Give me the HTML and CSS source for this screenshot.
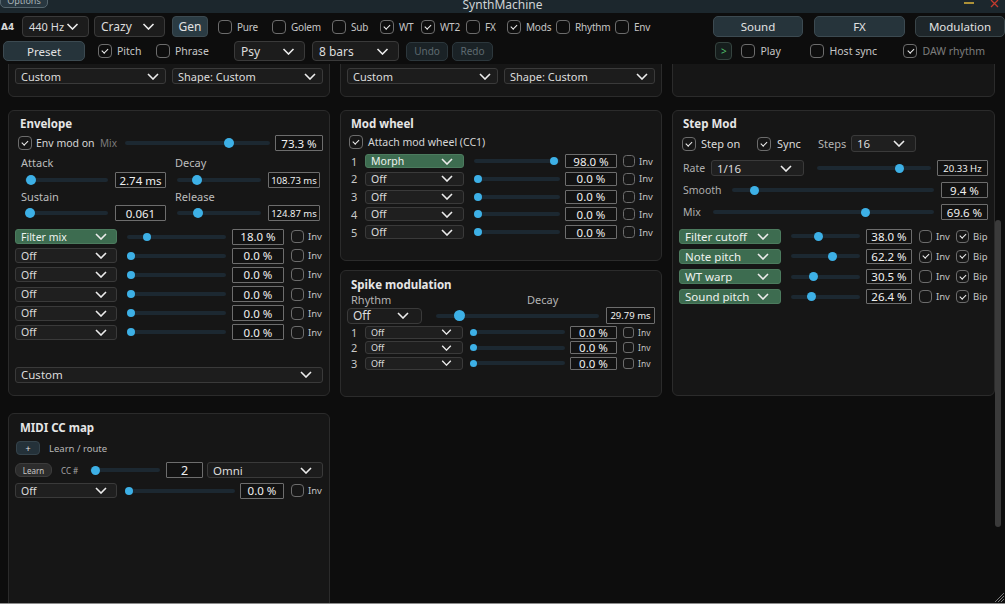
FILE: index.html
```html
<!DOCTYPE html>
<html lang="en">
<head>
<meta charset="utf-8">
<title>SynthMachine</title>
<link rel="stylesheet" href="styles.css">
</head>
<body>
<div class="app">
  <header class="titlebar">
    <div class="tb-left"><span class="opt-btn">Options</span></div>
    <div class="tb-title">SynthMachine</div>
    <div class="tb-right">
      <svg class="win-min" viewBox="0 0 10 4"><path d="M0 2h10"/></svg>
      <svg class="win-close" viewBox="0 0 9 9"><path d="M1 1l7 7M8 1l-7 7"/></svg>
    </div>
  </header>

  <div class="toolbar">
    <div class="trow r1">
      <span class="a4">A4</span>
      <div class="sel tsel w67"><span>440 Hz</span><svg class="chev" viewBox="0 0 12 7"><path d="M1 1l5 5 5-5"/></svg></div>
      <div class="sel tsel w71 ml5 big"><span>Crazy</span><svg class="chev" viewBox="0 0 12 7"><path d="M1 1l5 5 5-5"/></svg></div>
      <button class="btn gen">Gen</button>
      <label class="ck c1 w54"><span class="cb"></span>Pure</label>
      <label class="ck c1 w60"><span class="cb"></span>Golem</label>
      <label class="ck c1 w48"><span class="cb"></span>Sub</label>
      <label class="ck c1 w41"><span class="cb on"></span>WT</label>
      <label class="ck c1 w45"><span class="cb on"></span>WT2</label>
      <label class="ck c1 w41"><span class="cb"></span>FX</label>
      <label class="ck c1 w49"><span class="cb on"></span>Mods</label>
      <label class="ck c1 w59"><span class="cb"></span>Rhythm</label>
      <label class="ck c1"><span class="cb"></span>Env</label>
      <div class="tright">
        <button class="btn tab">Sound</button>
        <button class="btn tab fx">FX</button>
        <button class="btn tab mod">Modulation</button>
      </div>
    </div>
    <div class="trow r2">
      <button class="btn preset">Preset</button>
      <label class="ck w58 ml13"><span class="cb on"></span>Pitch</label>
      <label class="ck w78"><span class="cb"></span>Phrase</label>
      <div class="sel tsel t2 w71"><span>Psy</span><svg class="chev" viewBox="0 0 12 7"><path d="M1 1l5 5 5-5"/></svg></div>
      <div class="sel tsel t2 w87 ml7"><span>8 bars</span><svg class="chev" viewBox="0 0 12 7"><path d="M1 1l5 5 5-5"/></svg></div>
      <button class="btn dis undo">Undo</button>
      <button class="btn dis redo">Redo</button>
      <div class="tright r2r">
        <button class="btn go">&gt;</button>
        <label class="ck w69"><span class="cb"></span>Play</label>
        <label class="ck w93"><span class="cb"></span>Host sync</label>
        <label class="ck dimtxt"><span class="cb on"></span>DAW rhythm</label>
      </div>
    </div>
  </div>

  <main class="main">
    <div class="cols">
      <!-- column 1 -->
      <div class="col">
        <section class="panel ptop">
          <div class="sel"><span>Custom</span><svg class="chev" viewBox="0 0 12 7"><path d="M1 1l5 5 5-5"/></svg></div>
          <div class="sel"><span>Shape: Custom</span><svg class="chev" viewBox="0 0 12 7"><path d="M1 1l5 5 5-5"/></svg></div>
        </section>

        <section class="panel env">
          <div class="ptitle">Envelope</div>
          <div class="row envmod">
            <span class="cb on"></span><span class="envlbl">Env mod on</span><span class="mixlbl">Mix</span>
            <div class="sl d10" style="--v:.733"><i></i></div>
            <span class="val w48">73.3 %</span>
          </div>
          <div class="halves lbls">
            <span class="hl">Attack</span><span>Decay</span>
          </div>
          <div class="halves sls">
            <div class="hrow hl"><div class="sl d10" style="--v:.015"><i></i></div><span class="val w51">2.74 ms</span></div>
            <div class="hrow hr"><div class="sl d10" style="--v:.2"><i></i></div><span class="val w52 sm">108.73 ms</span></div>
          </div>
          <div class="halves lbls l2">
            <span class="hl">Sustain</span><span>Release</span>
          </div>
          <div class="halves sls s2">
            <div class="hrow hl"><div class="sl d10" style="--v:0"><i></i></div><span class="val w51">0.061</span></div>
            <div class="hrow hr"><div class="sl d10" style="--v:.216"><i></i></div><span class="val w52 sm">124.87 ms</span></div>
          </div>
          <div class="mods emods">
            <div class="mrow"><div class="sel green w102"><span>Filter mix</span><svg class="chev" viewBox="0 0 12 7"><path d="M1 1l5 5 5-5"/></svg></div><div class="sl d8" style="--v:.18"><i></i></div><span class="val w52">18.0 %</span><span class="cb s13"></span><span class="inv">Inv</span></div>
            <div class="mrow"><div class="sel w102"><span>Off</span><svg class="chev" viewBox="0 0 12 7"><path d="M1 1l5 5 5-5"/></svg></div><div class="sl d8" style="--v:0"><i></i></div><span class="val w52">0.0 %</span><span class="cb s13"></span><span class="inv">Inv</span></div>
            <div class="mrow"><div class="sel w102"><span>Off</span><svg class="chev" viewBox="0 0 12 7"><path d="M1 1l5 5 5-5"/></svg></div><div class="sl d8" style="--v:0"><i></i></div><span class="val w52">0.0 %</span><span class="cb s13"></span><span class="inv">Inv</span></div>
            <div class="mrow"><div class="sel w102"><span>Off</span><svg class="chev" viewBox="0 0 12 7"><path d="M1 1l5 5 5-5"/></svg></div><div class="sl d8" style="--v:0"><i></i></div><span class="val w52">0.0 %</span><span class="cb s13"></span><span class="inv">Inv</span></div>
            <div class="mrow"><div class="sel w102"><span>Off</span><svg class="chev" viewBox="0 0 12 7"><path d="M1 1l5 5 5-5"/></svg></div><div class="sl d8" style="--v:0"><i></i></div><span class="val w52">0.0 %</span><span class="cb s13"></span><span class="inv">Inv</span></div>
            <div class="mrow"><div class="sel w102"><span>Off</span><svg class="chev" viewBox="0 0 12 7"><path d="M1 1l5 5 5-5"/></svg></div><div class="sl d8" style="--v:0"><i></i></div><span class="val w52">0.0 %</span><span class="cb s13"></span><span class="inv">Inv</span></div>
          </div>
          <div class="sel envfoot"><span>Custom</span><svg class="chev" viewBox="0 0 12 7"><path d="M1 1l5 5 5-5"/></svg></div>
        </section>

        <section class="panel midi">
          <div class="ptitle">MIDI CC map</div>
          <div class="row plusrow">
            <button class="btn plus">+</button><span class="lr">Learn / route</span>
          </div>
          <div class="row learnrow">
            <button class="btn learn">Learn</button><span class="cclbl">CC #</span>
            <div class="sl d9" style="--v:.01"><i></i></div>
            <span class="val w37 big">2</span>
            <div class="sel omni"><span>Omni</span><svg class="chev" viewBox="0 0 12 7"><path d="M1 1l5 5 5-5"/></svg></div>
          </div>
          <div class="mrow midioff"><div class="sel w102"><span>Off</span><svg class="chev" viewBox="0 0 12 7"><path d="M1 1l5 5 5-5"/></svg></div><div class="sl d8" style="--v:0"><i></i></div><span class="val w44">0.0 %</span><span class="cb s13"></span><span class="inv">Inv</span></div>
        </section>
      </div>

      <!-- column 2 -->
      <div class="col">
        <section class="panel ptop">
          <div class="sel"><span>Custom</span><svg class="chev" viewBox="0 0 12 7"><path d="M1 1l5 5 5-5"/></svg></div>
          <div class="sel"><span>Shape: Custom</span><svg class="chev" viewBox="0 0 12 7"><path d="M1 1l5 5 5-5"/></svg></div>
        </section>

        <section class="panel wheel">
          <div class="ptitle">Mod wheel</div>
          <div class="row attach"><span class="cb on"></span><span>Attach mod wheel (CC1)</span></div>
          <div class="mods wmods">
            <div class="wrow"><span class="num">1</span><div class="sel green w99"><span>Morph</span><svg class="chev" viewBox="0 0 12 7"><path d="M1 1l5 5 5-5"/></svg></div><div class="sl d8" style="--v:.98"><i></i></div><span class="val w52">98.0 %</span><span class="cb s12"></span><span class="inv">Inv</span></div>
            <div class="wrow"><span class="num">2</span><div class="sel w99"><span>Off</span><svg class="chev" viewBox="0 0 12 7"><path d="M1 1l5 5 5-5"/></svg></div><div class="sl d8" style="--v:0"><i></i></div><span class="val w52">0.0 %</span><span class="cb s12"></span><span class="inv">Inv</span></div>
            <div class="wrow"><span class="num">3</span><div class="sel w99"><span>Off</span><svg class="chev" viewBox="0 0 12 7"><path d="M1 1l5 5 5-5"/></svg></div><div class="sl d8" style="--v:0"><i></i></div><span class="val w52">0.0 %</span><span class="cb s12"></span><span class="inv">Inv</span></div>
            <div class="wrow"><span class="num">4</span><div class="sel w99"><span>Off</span><svg class="chev" viewBox="0 0 12 7"><path d="M1 1l5 5 5-5"/></svg></div><div class="sl d8" style="--v:0"><i></i></div><span class="val w52">0.0 %</span><span class="cb s12"></span><span class="inv">Inv</span></div>
            <div class="wrow"><span class="num">5</span><div class="sel w99"><span>Off</span><svg class="chev" viewBox="0 0 12 7"><path d="M1 1l5 5 5-5"/></svg></div><div class="sl d8" style="--v:0"><i></i></div><span class="val w52">0.0 %</span><span class="cb s12"></span><span class="inv">Inv</span></div>
          </div>
        </section>

        <section class="panel spike">
          <div class="ptitle">Spike modulation</div>
          <div class="row spklbls"><span class="rhy">Rhythm</span><span class="dec">Decay</span></div>
          <div class="row spkmain">
            <div class="sel spksel"><span>Off</span><svg class="chev" viewBox="0 0 12 7"><path d="M1 1l5 5 5-5"/></svg></div>
            <div class="sl d11" style="--v:.12"><i></i></div>
            <span class="val w49 sm h17">29.79 ms</span>
          </div>
          <div class="mods smods">
            <div class="srow"><span class="num">1</span><div class="sel w98 tiny"><span>Off</span><svg class="chev" viewBox="0 0 12 7"><path d="M1 1l5 5 5-5"/></svg></div><div class="sl d7" style="--v:0"><i></i></div><span class="val w47">0.0 %</span><span class="cb s11"></span><span class="inv small">Inv</span></div>
            <div class="srow"><span class="num">2</span><div class="sel w98 tiny"><span>Off</span><svg class="chev" viewBox="0 0 12 7"><path d="M1 1l5 5 5-5"/></svg></div><div class="sl d7" style="--v:0"><i></i></div><span class="val w47">0.0 %</span><span class="cb s11"></span><span class="inv small">Inv</span></div>
            <div class="srow"><span class="num">3</span><div class="sel w98 tiny"><span>Off</span><svg class="chev" viewBox="0 0 12 7"><path d="M1 1l5 5 5-5"/></svg></div><div class="sl d7" style="--v:0"><i></i></div><span class="val w47">0.0 %</span><span class="cb s11"></span><span class="inv small">Inv</span></div>
          </div>
        </section>
      </div>

      <!-- column 3 -->
      <div class="col">
        <section class="panel ptop"></section>

        <section class="panel step">
          <div class="ptitle">Step Mod</div>
          <div class="row stepon">
            <span class="cb on"></span><span class="son">Step on</span>
            <span class="cb on"></span><span class="sync">Sync</span>
            <span class="steps">Steps</span>
            <div class="sel w65 mid"><span>16</span><svg class="chev" viewBox="0 0 12 7"><path d="M1 1l5 5 5-5"/></svg></div>
          </div>
          <div class="row rate">
            <span class="glbl w28">Rate</span>
            <div class="sel w93 mid"><span>1/16</span><svg class="chev" viewBox="0 0 12 7"><path d="M1 1l5 5 5-5"/></svg></div>
            <div class="sl d9" style="--v:.745"><i></i></div>
            <span class="val w51 sm">20.33 Hz</span>
          </div>
          <div class="row smooth">
            <span class="glbl w49">Smooth</span>
            <div class="sl d9" style="--v:.094"><i></i></div>
            <span class="val w47">9.4 %</span>
          </div>
          <div class="row smix">
            <span class="glbl w30">Mix</span>
            <div class="sl d9" style="--v:.696"><i></i></div>
            <span class="val w47">69.6 %</span>
          </div>
          <div class="mods stmods">
            <div class="strow"><div class="sel green w102 mid"><span>Filter cutoff</span><svg class="chev" viewBox="0 0 12 7"><path d="M1 1l5 5 5-5"/></svg></div><div class="sl d9" style="--v:.38"><i></i></div><span class="val w46">38.0 %</span><span class="cb s13"></span><span class="inv">Inv</span><span class="cb s13 on"></span><span class="inv">Bip</span></div>
            <div class="strow"><div class="sel green w102 mid"><span>Note pitch</span><svg class="chev" viewBox="0 0 12 7"><path d="M1 1l5 5 5-5"/></svg></div><div class="sl d9" style="--v:.622"><i></i></div><span class="val w46">62.2 %</span><span class="cb s13 on"></span><span class="inv">Inv</span><span class="cb s13 on"></span><span class="inv">Bip</span></div>
            <div class="strow"><div class="sel green w102 mid"><span>WT warp</span><svg class="chev" viewBox="0 0 12 7"><path d="M1 1l5 5 5-5"/></svg></div><div class="sl d9" style="--v:.305"><i></i></div><span class="val w46">30.5 %</span><span class="cb s13"></span><span class="inv">Inv</span><span class="cb s13 on"></span><span class="inv">Bip</span></div>
            <div class="strow"><div class="sel green w102 mid"><span>Sound pitch</span><svg class="chev" viewBox="0 0 12 7"><path d="M1 1l5 5 5-5"/></svg></div><div class="sl d9" style="--v:.264"><i></i></div><span class="val w46">26.4 %</span><span class="cb s13"></span><span class="inv">Inv</span><span class="cb s13 on"></span><span class="inv">Bip</span></div>
          </div>
        </section>
      </div>
    </div>
    <div class="vscroll"></div>
  </main>
  <svg class="grip" viewBox="0 0 10 10"><path d="M9 3L3 9M9 6L6 9M9 0L0 9"/></svg>
</div>
</body>
</html>
```

FILE: styles.css
```css
* { box-sizing: border-box; }
html, body { margin: 0; padding: 0; background: #0d0d0d; }
body {
  width: 1005px; height: 604px; overflow: hidden;
  font-family: "Noto Sans", "DejaVu Sans", sans-serif;
  font-size: 10.5px; color: #d4d4d4;
}
button { font: inherit; color: inherit; margin: 0; padding: 0; }
.app {
  position: relative; height: 604px; display: flex; flex-direction: column;
  overflow: hidden; border-bottom: 1px solid #8c8c8c;
}

/* title bar */
.titlebar {
  flex: none; height: 13px; background: #1c272d;
  display: grid; grid-template-columns: 1fr auto 1fr; overflow: hidden;
}
.tb-left { display: flex; align-items: flex-start; }
.opt-btn {
  margin-top: -7px; width: 48px; height: 15px;
  border: 1px solid #56666e; border-radius: 5px; background: #283740;
  color: #aab4b8; font-size: 9px; line-height: 11px;
  display: flex; align-items: center; justify-content: center;
}
.tb-title { font-size: 12px; line-height: 13px; margin-top: -2px; color: #d0d4d6; }
.tb-right { display: flex; justify-content: flex-end; align-items: flex-start; }
.win-min { width: 10px; height: 4px; margin-top: 1px; margin-right: 16px; stroke: #d4ad3a; stroke-width: 1.6; }
.win-close { width: 9px; height: 9px; margin-top: -1px; margin-right: 6px; stroke: #c43b2e; stroke-width: 1.3; fill: none; }

/* toolbar */
.toolbar { flex: none; height: 51px; padding-top: 3px; display: flex; flex-direction: column; gap: 4px; }
.trow { display: flex; align-items: center; }
.trow.r1 { height: 21px; }
.trow.r2 { height: 20px; }
.a4 {
  width: 22px; padding-left: 1px; flex: none;
  font-family: "DejaVu Sans", sans-serif; font-weight: 700; font-size: 9px; color: #d8d8d8;
}
.tright { margin-left: auto; display: flex; align-items: center; }
.r2r { margin-right: 20px; }

.btn {
  flex: none; display: flex; align-items: center; justify-content: center;
  border: 1px solid #3c4a51; background: #26343b; border-radius: 4px; color: #e2e2e2;
}
.gen { width: 36px; height: 21px; font-size: 12px; margin-left: 7px; margin-right: 10px; background: #2a3b43; }
.tab { width: 90px; height: 21px; font-size: 11.5px; border-radius: 5px; }
.tab.fx { width: 91px; margin-left: 11px; }
.tab.mod { margin-left: 10px; background: #1e262a; border-color: #3a4549; }
.preset { width: 82px; height: 20px; margin-left: 3px; font-size: 11.5px; border-radius: 5px; }
.dis { height: 19px; background: #1a2226; border-color: #2c373c; color: #5e6a70; font-size: 10px; border-radius: 5px; }
.undo { width: 42px; margin-left: 7px; }
.redo { width: 41px; margin-left: 4px; }
.go { width: 17px; height: 18px; background: #161e1d; border-color: #35433f; color: #4fbf6a; font-size: 10px; margin-right: 9px; }

/* check items */
.ck { display: flex; align-items: center; gap: 5px; flex: none; white-space: nowrap; color: #c6c6c6; }
.ck.c1 { font-size: 10px; letter-spacing: -0.2px; }
.dimtxt { color: #7d7d7d; }
.cb {
  flex: none; width: 14px; height: 14px; border: 1.3px solid #6c6c6c; border-radius: 4px;
  display: inline-flex; align-items: center; justify-content: center;
}
.cb.on::after {
  content: ""; width: 2.5px; height: 5px;
  border-right: 1.4px solid #f0f0f0; border-bottom: 1.4px solid #f0f0f0;
  transform: translateY(-1px) rotate(45deg);
}
.cb.s13 { width: 13px; height: 13px; }
.cb.s12 { width: 12px; height: 12px; border-radius: 3.5px; }
.cb.s11 { width: 11px; height: 11px; border-radius: 3px; }

.w41 { width: 41px; } .w45 { width: 45px; } .w48 { width: 48px; } .w49 { width: 49px; }
.w54 { width: 54px; } .w58 { width: 58px; } .w59 { width: 59px; } .w60 { width: 60px; }
.w69 { width: 69px; } .w78 { width: 78px; } .w93 { width: 93px; }
.w67 { width: 67px; } .w71 { width: 71px; } .w87 { width: 87px; }
.w65 { width: 65px; } .w28 { width: 28px; } .w30 { width: 30px; }
.ml5 { margin-left: 5px; } .ml7 { margin-left: 7px; } .ml13 { margin-left: 13px; }

/* selects */
.sel {
  flex: none; display: flex; align-items: center; justify-content: space-between;
  background: #1f1f1f; border: 1px solid #3a3a3a; border-radius: 3px; color: #dcdcdc;
  padding: 0 8px 0 5px; height: 15px; font-size: 10.5px; white-space: nowrap; overflow: hidden;
}
.sel .chev { width: 12px; height: 7px; fill: none; stroke: #ececec; stroke-width: 1.6; flex: none; }
.tsel { height: 21px; font-size: 11px; padding: 0 9px 0 6px; background: #1c1c1c; border-radius: 4px; }
.tsel.big { font-size: 12px; }
.tsel.t2 { height: 20px; font-size: 12px; }
.tsel .chev { width: 13px; height: 7px; }
.green { background: #3d6c50; border-color: #4c7b5e; color: #eef2ef; }
.w102 { width: 102px; padding-right: 9px; }
.w99 { width: 99px; padding-right: 10px; }
.w98 { width: 98px; padding-right: 10px; }
.w93 { width: 93px; padding-right: 11px; }
.mid { font-size: 11.5px; }
.tiny { font-size: 9px; }
.tiny .chev { width: 11px; height: 6px; }

/* slider */
.sl { position: relative; flex: 1 1 auto; min-width: 0; height: 12px; --d: 8px; }
.sl::before {
  content: ""; position: absolute; left: 0; right: 0; top: 50%; height: 4px; margin-top: -2px;
  background: #1c2831; border-radius: 2px;
}
.sl i {
  position: absolute; top: 50%; width: var(--d); height: var(--d); margin-top: calc(var(--d) / -2);
  left: calc(var(--v) * (100% - var(--d))); border-radius: 50%; background: #3db0e6;
}
.d7 { --d: 7px; } .d8 { --d: 8px; } .d9 { --d: 9px; } .d10 { --d: 10px; } .d11 { --d: 11px; }

/* value boxes */
.val {
  flex: none; display: flex; align-items: center; justify-content: center;
  height: 16px; border: 1.5px solid #6d6d6d; background: #121212; color: #f0f0f0;
  font-size: 11.5px; white-space: nowrap; border-radius: 1px;
}
.val.sm { font-size: 9.5px; }
.val.big { font-size: 12.5px; }
.val.h17 { height: 17px; }
.w37 { width: 37px; } .w44 { width: 44px; } .w46 { width: 46px; } .w47 { width: 47px; }
.w51 { width: 51px; } .w52 { width: 52px; } .val.w48 { width: 48px; } .val.w49 { width: 49px; }
.inv { flex: none; font-size: 9.5px; color: #c4c4c4; }
.inv.small { font-size: 8.5px; }

/* main grid */
.main { position: relative; flex: 1 1 auto; overflow: hidden; }
.cols {
  display: grid; grid-template-columns: 322px 322px 323px; column-gap: 10px;
  padding-left: 8px; margin-top: -12px; align-items: start;
}
.col { display: flex; flex-direction: column; }
.panel {
  background: #161616; border: 1px solid #2b2b2b; border-radius: 6px;
  padding: 0 6px; display: flex; flex-direction: column;
}
.ptitle {
  height: 14px; line-height: 14px; font-weight: 700; font-size: 11.5px; color: #e6e6e6;
  margin-top: 6px; margin-left: 4px;
}
.row { display: flex; align-items: center; }

.ptop { height: 45px; padding-top: 15px; flex-direction: row; gap: 6px; align-items: flex-start; }
.ptop .sel { flex: 1 1 0; height: 16px; font-size: 11px; background: #1c1c1c; padding-right: 6px; }

/* envelope */
.env { height: 286px; margin-top: 13px; }
.env .ptitle { margin-left: 5px; }
.envmod { height: 16px; margin-top: 4px; }
.envmod .cb { margin-left: 3px; }
.envlbl { width: 68px; padding-left: 4px; flex: none; color: #d6d6d6; font-size: 10.5px; }
.mixlbl { width: 25px; flex: none; color: #7c7c7c; font-size: 10px; }
.envmod .sl { margin-right: 5px; }
.halves { display: grid; grid-template-columns: 151px 148px; column-gap: 9px; }
.lbls { height: 14px; margin-top: 5px; color: #bdbdbd; font-size: 11px; line-height: 14px; }
.lbls .hl { padding-left: 6px; }
.lbls.l2 { margin-top: 2px; }
.sls { height: 16px; margin-top: 2px; }
.sls.s2 { margin-top: 1px; }
.hrow { display: flex; align-items: center; }
.hrow.hl .sl { margin-left: 10px; margin-right: 7px; }
.hrow.hr .sl { margin-left: 2px; margin-right: 7px; }
.hrow.hr { padding-right: 3px; }
.mods { display: flex; flex-direction: column; }
.emods { margin-top: 8px; gap: 4.2px; }
.mrow { display: flex; align-items: center; height: 15px; }
.mrow .sl { margin: 0 6px 0 10px; }
.mrow .cb { margin-left: 7px; margin-right: 4px; }
.mrow .inv { width: 15px; }
.envfoot { margin-top: 27px; height: 16px; font-size: 11.5px; padding-right: 10px; background: #1d1d1d; }

/* midi */
.midi { height: 230px; margin-top: 17px; }
.midi .ptitle { margin-top: 7px; margin-left: 5px; }
.plusrow { height: 14px; margin-top: 6px; }
.plus { width: 24px; height: 14px; margin-left: 1px; background: #243139; border-color: #35434b; font-size: 9px; border-radius: 4px; }
.lr { margin-left: 9px; color: #b8b8b8; font-size: 9.5px; }
.learnrow { height: 16px; margin-top: 7px; }
.learn { width: 37px; height: 14px; background: #2c2c2c; border-color: #3c3c3c; color: #c8c8c8; font-size: 8px; border-radius: 6px; }
.cclbl { width: 38px; padding-left: 9px; flex: none; font-size: 8px; color: #a8a8a8; }
.learnrow .sl { margin-right: 6px; }
.omni { width: 116px; height: 16px; margin-left: 4px; font-size: 11.5px; padding-right: 10px; background: #1c1c1c; }
.midioff { margin-top: 5px; }
.midioff .sl { margin: 0 5px 0 8px; }

/* mod wheel */
.wheel { height: 151px; margin-top: 13px; }
.attach { height: 14px; margin-top: 4px; gap: 5px; font-size: 10.5px; color: #d6d6d6; }
.attach .cb { margin-left: 2px; }
.wmods { margin-top: 5px; gap: 3.75px; }
.wrow { display: flex; align-items: center; height: 14px; }
.num { width: 18px; padding-left: 4px; flex: none; font-size: 11px; color: #c8c8c8; }
.wrow .sel { height: 14px; }
.wrow .sl { margin: 0 5px 0 10px; }
.wrow .val { height: 14px; }
.wrow .cb { margin-left: 6px; margin-right: 4px; }
.wrow .inv { width: 16px; }

/* spike */
.spike { height: 127px; margin-top: 9px; }
.spike .ptitle { margin-top: 7px; }
.spklbls { height: 13px; margin-top: 1px; font-size: 11px; color: #b4b4b4; }
.rhy { width: 180px; padding-left: 4px; flex: none; }
.spkmain { height: 17px; margin-top: 1px; }
.spksel { width: 75px; height: 16px; font-size: 12px; padding-right: 12px; background: #1c1c1c; border-radius: 4px; }
.spkmain .sl { margin: 0 7px 0 14px; }
.smods { margin-top: 1.5px; gap: 2.5px; }
.srow { display: flex; align-items: center; height: 13px; }
.srow .sel { height: 13px; }
.srow .sl { margin: 0 5px 0 7px; }
.srow .val { height: 13px; }
.srow .cb { margin-left: 6px; margin-right: 4px; }
.srow .inv { width: 17px; }

/* step mod */
.step { height: 286px; margin-top: 13px; }
.stepon { height: 17px; margin-top: 4px; font-size: 11px; color: #dcdcdc; }
.stepon .cb { margin-left: 3px; }
.son { width: 58px; padding-left: 5px; flex: none; }
.sync { width: 47px; padding-left: 6px; flex: none; }
.steps { width: 33px; flex: none; color: #b4b4b4; }
.stepon .sel { height: 17px; padding-right: 10px; }
.rate { height: 16px; margin-top: 8px; }
.glbl { flex: none; padding-left: 4px; color: #aeaeae; font-size: 10.5px; }
.rate .sel { height: 16px; }
.rate .sl { margin: 0 6px 0 13px; }
.smooth { height: 16px; margin-top: 6px; }
.smooth .sl, .smix .sl { margin-right: 7px; }
.glbl.w49 { width: 53px; }
.glbl.w30 { width: 34px; }
.glbl.w28 { width: 32px; }
.smix { height: 16px; margin-top: 6px; }
.stmods { margin-top: 8.5px; gap: 5.3px; }
.strow { display: flex; align-items: center; height: 15px; }
.strow .sel { height: 15px; padding-right: 11px; }
.strow .sl { margin: 0 6px 0 10px; }
.strow .val { height: 15px; }
.strow .cb { margin-left: 7px; margin-right: 4px; }
.strow .inv { width: 16px; }
.strow .inv + .cb { margin-left: 4px; }
.strow .inv:last-child { width: 15px; }

/* scrollbar + grip */
.vscroll {
  position: absolute; left: 995px; top: 156px; width: 6px; height: 307px;
  background: #3a3a3a; border-radius: 3px;
}
.grip { position: absolute; right: 0; bottom: 0; width: 10px; height: 10px; stroke: #7a7a7a; stroke-width: 1; fill: none; }
```
